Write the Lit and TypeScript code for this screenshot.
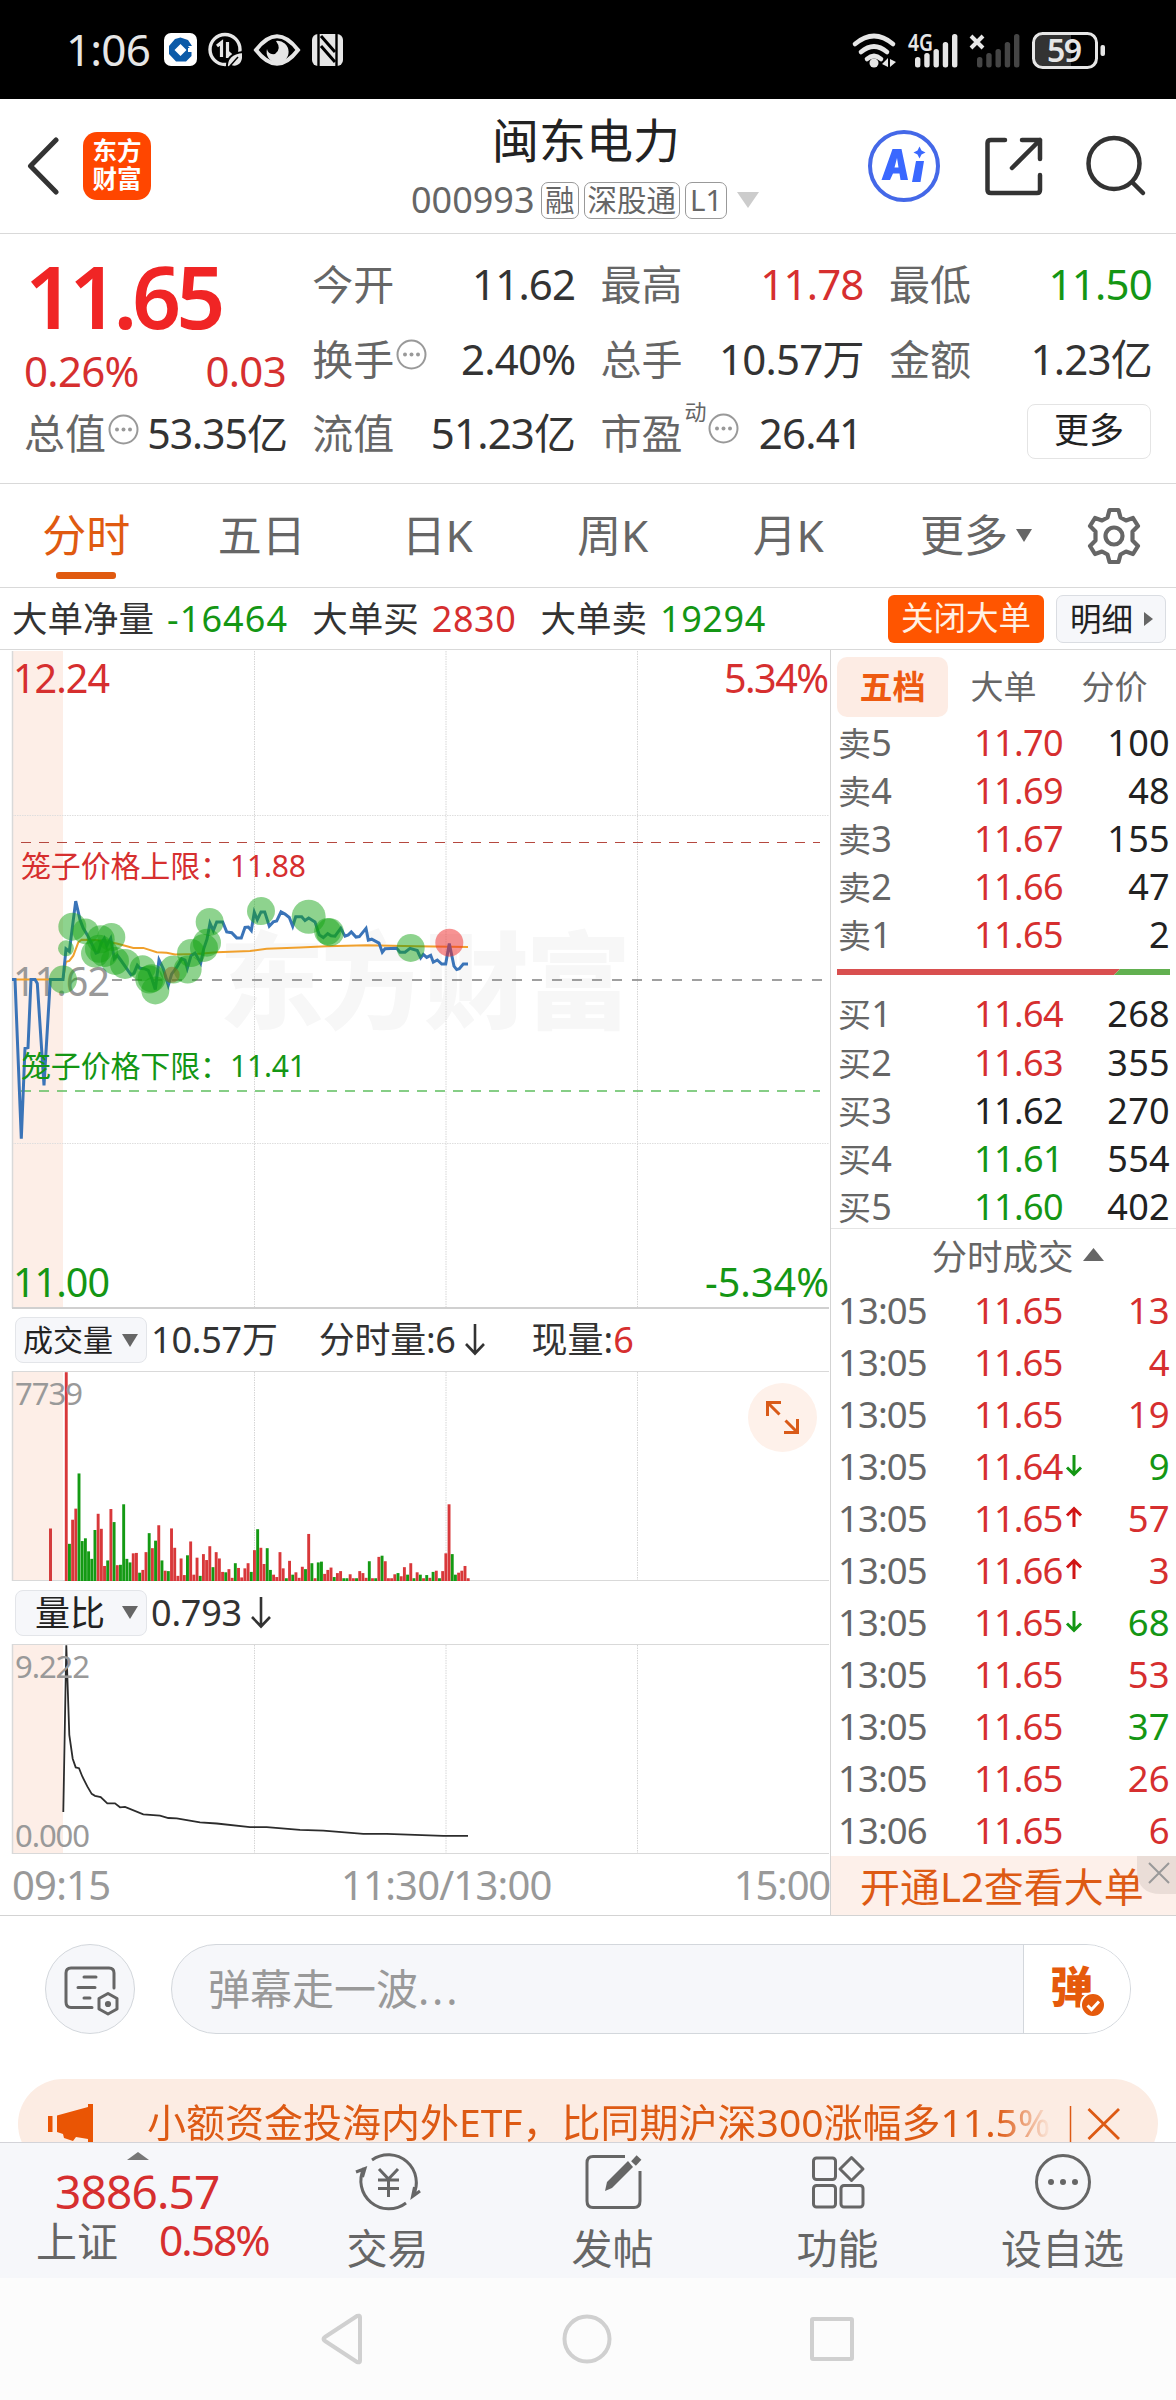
import { LitElement, html, svg, css } from "lit";
import { customElement } from "lit/decorators.js";

type Pt = [number, number];

/* Sample units: 3 per pixel across; the vertical unit depends on the pane. */
const X_UNIT = 3;
const PRICE_UNIT = 2.3059;
const PANE_UNIT = 2.529;

const toPoints = (pts: Pt[], yUnit: number) =>
  pts.map(([x, y]) => `${(x / X_UNIT).toFixed(1)},${(y / yUnit).toFixed(1)}`).join(" ");

const PRICE: Pt[] = [
  [36, 783], [45, 783], [64, 1150], [75, 942], [84, 940], [93, 783], [105, 783], [112, 792], [132, 1027], [151, 783],
  [189, 783], [198, 712], [208, 718], [227, 602], [240, 645], [250, 665], [262, 680], [275, 700], [288, 722], [295, 720],
  [303, 700], [313, 688], [320, 705], [332, 688], [343, 735], [352, 727], [362, 738], [393, 772], [402, 768], [412, 750],
  [420, 757], [433, 758], [445, 762], [455, 780], [466, 806], [477, 738], [490, 758], [505, 796], [515, 770], [530, 755],
  [545, 735], [555, 738], [562, 757], [573, 728], [585, 722], [595, 735], [602, 745], [611, 712], [621, 690], [630, 653],
  [640, 670], [650, 650], [668, 650], [680, 673], [695, 675], [710, 687], [724, 687], [735, 663], [745, 662], [754, 670],
  [763, 628], [772, 645], [783, 627], [794, 627], [808, 660], [820, 650], [830, 648], [843, 627], [855, 632], [868, 640],
  [878, 660], [887, 638], [905, 638], [915, 647], [926, 641], [945, 650], [958, 680], [970, 686], [983, 677], [993, 682],
  [1005, 683], [1022, 665], [1035, 683], [1045, 680], [1054, 673], [1068, 685], [1078, 684], [1098, 665], [1105, 692],
  [1115, 690], [1137, 699], [1147, 720], [1155, 712], [1190, 711], [1200, 720], [1215, 720], [1230, 711], [1252, 716],
  [1262, 733], [1270, 725], [1280, 732], [1292, 727], [1300, 743], [1312, 738], [1325, 747], [1337, 747], [1348, 700],
  [1362, 752], [1370, 760], [1378, 758], [1390, 747], [1404, 747],
];

const AVERAGE: Pt[] = [
  [36, 783], [189, 783], [198, 742], [208, 740], [220, 728], [235, 697], [245, 691], [290, 692], [350, 700], [400, 710],
  [430, 710], [470, 720], [500, 721], [525, 725], [590, 724], [650, 720], [750, 717], [800, 712], [900, 709], [980, 706],
  [1100, 704], [1250, 706], [1404, 708],
];

/* x, y in sample units, radius in pixels */
const SELLS: [number, number, number][] = [
  [189, 783, 14], [198, 711, 8], [217, 661, 14], [257, 672, 13], [302, 690, 14], [334, 685, 14], [285, 723, 14],
  [297, 712, 14], [313, 722, 14], [345, 740, 14], [375, 747, 15], [428, 757, 13], [448, 783, 14], [455, 780, 14],
  [466, 808, 14], [520, 760, 14], [563, 760, 14], [573, 722, 14], [612, 710, 14], [621, 698, 14], [629, 650, 14],
  [783, 625, 14], [926, 638, 17], [983, 672, 13.5], [990, 674, 14], [1232, 710, 14],
];

const RATIO: Pt[] = [
  [190, 1295], [199, 873], [208, 1100], [218, 1160], [227, 1182], [237, 1184], [247, 1205], [262, 1230], [275, 1249],
  [285, 1254], [302, 1257], [322, 1273], [345, 1273], [360, 1283], [375, 1282], [430, 1301], [480, 1304], [505, 1310],
  [530, 1311], [600, 1321], [650, 1324], [750, 1333], [800, 1333], [900, 1340], [970, 1342], [1090, 1350], [1160, 1350],
  [1330, 1355], [1404, 1355],
];

/* One bar per minute: height in units, r = up, g = down */
const VOLUME =
  "528r 94g 155r 183r 272g 101g 108g 75g 56g 129g 170r 132r 38r 52g 182r 149g 40r 41g 194g 56g 47g 70r 71r 21g 28r 73r 121g 83r 102g 141r 52g 26r 25g 133r 84r 13r 57r 15r 65g 100r 16r 59r 13g 68r 53r 88r 35g 73r 57r 23r 22g 30r 8r 45g 33r 9r 32r 45r 23g 78r 131g 84r 43r 83g 28g 16r 10r 73r 32r 7g 51r 16g 22r 8r 36r 30g 119r 45g 7r 47g 49g 18r 28r 34r 10g 20r 25r 7g 7g 17r 7r 7g 25r 20r 8r 50g 7r 7g 61r 64g 50r 7r 7r 17r 20g 12r 35r 16g 45r 7g 22r 16g 7r 15g 8r 23g 26r 7g 25r 70r 194r 68g 16g 21r 26r 38r 7r"
    .split(" ")
    .map((s) => ({ h: parseInt(s, 10), up: s.endsWith("r") }));

const ASKS = [["卖5", "11.70", "100", "up"], ["卖4", "11.69", "48", "up"], ["卖3", "11.67", "155", "up"], ["卖2", "11.66", "47", "up"], ["卖1", "11.65", "2", "up"]];
const BIDS = [["买1", "11.64", "268", "up"], ["买2", "11.63", "355", "up"], ["买3", "11.62", "270", "flat"], ["买4", "11.61", "554", "down"], ["买5", "11.60", "402", "down"]];
const TICKS = [
  ["13:05", "11.65", "", "13", "up"], ["13:05", "11.65", "", "4", "up"], ["13:05", "11.65", "", "19", "up"],
  ["13:05", "11.64", "d", "9", "down"], ["13:05", "11.65", "u", "57", "up"], ["13:05", "11.66", "u", "3", "up"],
  ["13:05", "11.65", "d", "68", "down"], ["13:05", "11.65", "", "53", "up"], ["13:05", "11.65", "", "37", "down"],
  ["13:05", "11.65", "", "26", "up"], ["13:06", "11.65", "", "6", "up"],
];

const dots = html`<svg class="dots" width="31" height="31" viewBox="0 0 31 31">
  <circle cx="15.5" cy="15.5" r="14" fill="none" stroke="#999" stroke-width="2" />
  <g fill="#999"><circle cx="9" cy="15.5" r="2" /><circle cx="15.5" cy="15.5" r="2" /><circle cx="22" cy="15.5" r="2" /></g>
</svg>`;

const caret = html`<svg width="16" height="13" viewBox="0 0 16 13"><path d="M0 0H16L8 13Z" fill="#666" /></svg>`;

const arrowDown = html`<svg class="ar" width="20" height="32" viewBox="0 0 20 32">
  <path d="M10 0V29M1 20L10 29.500L19 20" fill="none" stroke="#333" stroke-width="2.600" />
</svg>`;

const tickArrow = (dir: string) =>
  dir === "u"
    ? html`<svg width="18" height="24" viewBox="0 0 18 24"><path d="M9 21V3M2 9.500L9 2.500L16 9.500" fill="none" stroke="#d01515" stroke-width="3" /></svg>`
    : dir === "d"
      ? html`<svg width="18" height="24" viewBox="0 0 18 24"><path d="M9 1V20M2 13.500L9 20.500L16 13.500" fill="none" stroke="#149614" stroke-width="3" /></svg>`
      : "";

const gridLines = (top: number, bottom: number) =>
  [254.5, 446, 637.5].map((x) => svg`<line x1=${x} x2=${x} y1=${top} y2=${bottom} stroke="#d6d6d6" stroke-width="1" stroke-dasharray="1.500 1" />`);

const signal = (x: number, color: string) =>
  [56, 52, 48, 41, 33].map((top, i) => svg`<rect x=${x + i * 9.25} y=${top} width="5.400" height=${66.500 - top} rx="2.500" fill=${color} />`);

@customElement("app-root")
export class AppRoot extends LitElement {
  static styles = css`
    :host { display: block; width: 1176px; height: 2400px; overflow: hidden; background: #fff; color: #333;
      font-family: "Noto Sans", "Noto Sans CJK SC", sans-serif; }
    * { box-sizing: border-box; }
    svg { display: block; flex: none; }
    div, span { white-space: nowrap; }
    .up { color: #d62f2f; }
    .down { color: #149614; }
    .flat { color: #222; }

    .status { height: 99px; background: #000; display: flex; align-items: center; padding: 0 70px 0 66px; color: #e6e6e6; }
    .time { font-size: 44px; line-height: 58px; height: 60px; width: 96px; letter-spacing: -0.8px; }
    .status .right { margin-left: auto; overflow: visible; }

    .header { height: 135px; border-bottom: 1px solid #d9d9d9; display: grid; grid-template-columns: 411px 350px 1fr; }
    .hleft { display: flex; align-items: center; padding-left: 26px; gap: 24px; }
    .logo { width: 68px; height: 68px; border-radius: 14px; background: #ff4600; color: #fff; font-weight: 700; font-size: 24.5px; line-height: 28px; padding-top: 5px; text-align: center; }
    .title { text-align: center; font-size: 47px; line-height: 56px; padding-top: 13px; color: #222; }
    .code { display: flex; align-items: center; height: 38px; gap: 5px; font-size: 36px; color: #666; margin-top: 13px; line-height: 36px; }
    .code b { font-weight: 400; width: 125px; }
    .chip { border: 1.5px solid #999; border-radius: 7px; height: 37px; padding: 0 3px; font-size: 29.5px; line-height: 33px; }
    .chip.l1 { padding: 0 4px; }
    .code svg { margin-left: 5px; }
    .hright { display: flex; align-items: center; padding-left: 105px; gap: 40.500px; }

    .quote { height: 250px; border-bottom: 1px solid #d9d9d9; padding: 13px 25px 0 24px; display: grid; grid-template-columns: repeat(4, 262px); column-gap: 26.3px; color: #333; font-size: 42px; }
    .cell { height: 74.6px; display: flex; align-items: center; line-height: 74.6px; }
    .cell i { font-style: normal; color: #666; font-size: 41px; }
    .cell span { margin-left: auto; letter-spacing: -0.8px; margin-right: -1px; }
    .cell .dots { margin: -9px 0 0 2px; }
    .price { font-size: 86px; font-weight: 600; line-height: 97px; letter-spacing: -5px; padding-left: 1px; color: #f02525; }
    .chg { display: flex; justify-content: space-between; line-height: 53px; letter-spacing: -0.7px; }
    .cap { height: 73px; line-height: 73px; }
    .cap span { letter-spacing: -1px; font-size: 41px; }
    .cell .sup { font-size: 22px; line-height: 24px; margin: -44px 0 0 2px; color: #666; }
    .cell .pe { margin: 0 auto 0 20px; }
    .more { margin-left: auto; width: 124px; height: 55px; border: 1.5px solid #e4e4e4; border-radius: 8px; font-size: 35px; line-height: 50px; text-align: center; margin-top: -4px; color: #222; }

    .tabs { height: 104px; margin-left: -1.5px; border-bottom: 1px solid #d9d9d9; display: flex; font-size: 44px; line-height: 103px; color: #666; align-items: center; }
    .tab { width: 175.5px; text-align: center; height: 103px; display: flex; flex-direction: column; align-items: center; }
    .tab.on { color: #e05a10; }
    .tab.on::after { content: ""; width: 60px; height: 6.500px; border-radius: 3px; background: #e05a10; margin-top: -15px; flex: none; }
    .tabmore { margin-left: 44px; display: flex; align-items: center; gap: 8px; width: 167px; }

    .big { height: 62px; border-bottom: 1px solid #d9d9d9; display: flex; align-items: center; font-size: 35.5px; padding: 0 10px 0 12px; line-height: 61px; color: #333; }
    .big .n { margin: 0 24px 0 13px; font-size: 36px; letter-spacing: 0.6px; }
    .big .net { letter-spacing: 1.1px; }
    .off { margin-left: auto; width: 156px; height: 48px; border-radius: 6px; background: #ff5500; color: #fff1e4; font-size: 32.5px; line-height: 46px; text-align: center; }
    .detail { margin-left: 12px; width: 110px; height: 48px; border: 1px solid #dadde2; border-radius: 7px; background: #f6f7fa; display: flex; align-items: center; padding-left: 13px; gap: 11px; font-size: 31.5px; color: #222; line-height: 46px; }

    .main { display: flex; height: 1266px; border-bottom: 1px solid #d3d3d3; }
    .charts { width: 830px; }
    .charts svg { font-family: "Noto Sans", "Noto Sans CJK SC", sans-serif; }
    .ind { height: 62px; padding: 0 0 0 15px; display: flex; align-items: center; font-size: 36px; line-height: 60px; color: #333; }
    .ind.second { height: 63px; }
    .pick { width: 132px; height: 46px; border: 1px solid #e3e5e9; border-radius: 8px; background: #f6f7fa; display: flex; align-items: center; justify-content: flex-end; gap: 9px; padding-right: 8px; font-size: 30px; color: #222; line-height: 44px; }
    .pick.ratio { font-size: 35px; gap: 17px; }
    .ind .v { margin-left: 4px; letter-spacing: -0.2px; }
    .ind .m { margin-left: 41px; letter-spacing: -0.3px; }
    .ind .ar { margin-left: 9px; }
    .ind .c { margin-left: 47px; }
    .axis { height: 61px; display: flex; padding: 0 0 0 12px; font-size: 40px; line-height: 62px; color: #999; letter-spacing: -0.8px; }
    .axis span:first-child { width: 329px; }
    .axis span:last-child { margin-left: auto; letter-spacing: -1.2px; }

    .panel { flex: 1; border-left: 1.500px solid #d3d3d3; }
    .ptabs { display: flex; height: 69px; padding: 7px 0 0 6px; font-size: 33px; line-height: 60px; color: #666; }
    .ptabs span { width: 111px; text-align: center; height: 60px; }
    .ptabs .on { background: #fdece4; border-radius: 10px; color: #ee5a10; font-weight: 700; }
    .row { display: grid; grid-template-columns: 136px 108px 1fr; height: 48.1px; line-height: 48px; font-size: 36px; padding: 0 6px 0 7px; letter-spacing: 0.3px; }
    .row i { font-style: normal; color: #666; }
    .row i b { font-weight: 400; font-size: 33px; }
    .row u { text-decoration: none; text-align: right; color: #222; }
    .row span, .row div { letter-spacing: -0.6px; }
    .row div { display: flex; align-items: center; gap: 3px; }
    .ratio-bar { margin: 10px 0 15px 6px; width: 333px; }
    .thead { border-top: 1px solid #e4e4e4; margin-top: -3px; height: 56px; display: flex; justify-content: center; align-items: center; gap: 9px; padding-left: 28px; font-size: 35.5px; line-height: 54px; color: #666; }
    .thead svg { margin-top: -4px; }
    .tick { height: 52px; line-height: 52px; font-size: 36.5px; }
    .tick i { letter-spacing: -0.9px; }
    .tick div { letter-spacing: -1px; }
    .tick.up u { color: #d62f2f; }
    .tick.down u { color: #149614; }
    .promo { height: 59px; background: #fdf0ea; color: #dd5a14; font-size: 40px; line-height: 62px; padding-left: 29px; position: relative; }
    .promo svg { position: absolute; right: 0; top: 0; }

    .chat { height: 163px; padding: 28px 0 0 45px; display: flex; gap: 36px; }
    .round { width: 90px; height: 90px; border-radius: 45px; border: 1px solid #d3d7dc; background: #f6f7fa; }
    .input { width: 960px; height: 90px; border-radius: 45px; border: 1px solid #d3d7dc; background: #f6f7fa; overflow: hidden; display: flex; font-size: 42px; line-height: 88px; color: #999; padding-left: 36px; }
    .input .dotted { letter-spacing: 2.8px; }
    .dan { margin-left: auto; width: 107px; border-left: 1px solid #d3d7dc; background: #fff; color: #e55a0c; font-weight: 900; font-size: 43px; padding-left: 26px; line-height: 84px; position: relative; }
    .dan svg { position: absolute; left: 55px; top: 46px; }
    .clip { height: 63px; padding: 0 18px; overflow: hidden; }
    .banner { height: 90px; border-radius: 45px; background: #fcece3; color: #dd5a14; display: flex; font-size: 39px; padding-left: 30px; }
    .banner .txt { margin-left: 54px; line-height: 85px; width: 908px; overflow: hidden; -webkit-mask-image: linear-gradient(90deg, #000 850px, transparent 905px); mask-image: linear-gradient(90deg, #000 850px, transparent 905px); }

    .dock { height: 136px; background: #f6f7fa; border-top: 1px solid #d3d3d8; display: flex; color: #666; font-size: 41px; }
    .index { width: 314px; padding-top: 9px; }
    .index svg { margin-left: 127px; }
    .idx { font-size: 46px; line-height: 48px; margin: 7px 0 0 55px; letter-spacing: -0.8px; }
    .sh { display: flex; gap: 41px; line-height: 46px; margin: -2px 0 0 36px; padding-top: 5px; }
    .sh .up { letter-spacing: -2px; font-size: 42.5px; margin-top: -1px; }
    .item { width: 147px; display: flex; flex-direction: column; align-items: center; padding-top: 8px; line-height: 48px; }
    .item svg { margin-bottom: 11px; }
    .item + .item { margin-left: 78px; }
    .nav { height: 122px; background: #fcfcfc; display: flex; align-items: center; justify-content: center; gap: 196px; }
    .nav svg { fill: none; stroke: #d0d0d0; stroke-width: 4; stroke-linejoin: round; }
  `;

  private status() {
    return html`<div class="status">
      <span class="time">1:06</span>
      <svg width="184" height="40" viewBox="162 30 184 40">
        <rect x="164" y="33" width="33" height="33" rx="7" fill="#fff" />
        <path d="M180.500 37.500L188 40L192 46H188L191.500 50V56L186 61.500H176L169 54V46L175 39Z" fill="#0b5aa8" />
        <path d="M180.500 44L186.500 50L180.500 56L174.500 50ZM188 48H193V52H188Z" fill="#fff" />
        <circle cx="225" cy="49.500" r="15" fill="none" stroke="#e6e6e6" stroke-width="3.400" />
        <path d="M217 46L221.500 42.500V57M227.500 42V56.500H232.500L227.500 52" fill="none" stroke="#e6e6e6" stroke-width="3.200" />
        <path d="M227 68C226 57 233 53 243 52V58C242 66 235 68 231 66Z" fill="#e6e6e6" stroke="#000" stroke-width="2" />
        <path d="M230 66L238 57" stroke="#000" stroke-width="1.500" />
        <path d="M256 50Q277 22.500 298 50Q277 77.500 256 50Z" fill="none" stroke="#e6e6e6" stroke-width="4" />
        <path d="M267 49A11 11 0 1 0 276 41Q282 49 275 54Q268 55 267 49Z" fill="#e6e6e6" />
        <rect x="312" y="34" width="31" height="32" rx="6" fill="#e6e6e6" />
        <path d="M318.500 34V66M336.500 34V66" stroke="#000" stroke-width="2.400" />
        <path d="M321 36L335 52M321 46L335 62" stroke="#000" stroke-width="3" />
      </svg>
      <svg class="right" width="256" height="42" viewBox="850 28 256 42" font-family="Noto Sans">
        <g fill="none" stroke="#e6e6e6" stroke-width="5" stroke-linecap="round">
          <path d="M855 43Q874 27 893 43M861 51Q874 40 887 51M867 58Q874 52 881 58" stroke-width="4.600" />
        </g>
        <circle cx="874" cy="62" r="4.500" fill="#e6e6e6" />
        <path d="M882 63L888 57V66M890 58V66L896 61" fill="#e6e6e6" />
        <text x="908" y="49.500" font-size="22.500" font-weight="600" fill="#e6e6e6" textLength="25" lengthAdjust="spacingAndGlyphs">4G</text>
        ${signal(915, "#e6e6e6")}
        <path d="M971 35L983 47M983 35L971 47" stroke="#e6e6e6" stroke-width="4" />
        ${signal(977, "#454545")}
        <path d="M1042 33H1071V66H1042Q1033 66 1033 57V42Q1033 33 1042 33Z" fill="#333" />
        <rect x="1033.500" y="32.500" width="63" height="34" rx="9" fill="none" stroke="#e6e6e6" stroke-width="3" />
        <rect x="1100.500" y="44" width="4.500" height="11" rx="2" fill="#e6e6e6" />
        <text x="1064.500" y="61" font-size="32" font-weight="600" fill="#e6e6e6" text-anchor="middle" textLength="35">59</text>
      </svg>
    </div>`;
  }

  private header() {
    return html`<div class="header">
      <div class="hleft">
        <svg width="33" height="60" viewBox="0 0 33 60"><path d="M30 4L4.500 30L30 56" fill="none" stroke="#333" stroke-width="5" stroke-linecap="round" stroke-linejoin="round" /></svg>
        <div class="logo">东方<br />财富</div>
      </div>
      <div>
        <div class="title">闽东电力</div>
        <div class="code">
          <b>000993</b><span class="chip">融</span><span class="chip">深股通</span><span class="chip l1">L1</span>
          <svg width="22" height="16" viewBox="0 0 22 16"><path d="M0 0H22L11 16Z" fill="#ccc" /></svg>
        </div>
      </div>
      <div class="hright">
        <svg width="76" height="76" viewBox="866.500 128 76 76">
          <circle cx="904.500" cy="166" r="34" fill="none" stroke="#4468e8" stroke-width="4" />
          <path d="M893 149H902L908.500 180H901L900 173.500H893.500L890.500 180H882ZM897.500 158L895 167.500H899Z" fill="#3a68ff" fill-rule="evenodd" />
          <path d="M916.500 161H924.500L921 182H912.500ZM920 146.500L922 150.500L926 152.500L922 154.500L920 158.500L918 154.500L914 152.500L918 150.500Z" fill="#3a68ff" />
        </svg>
        <svg width="62" height="62" viewBox="982 135 62 62" fill="none" stroke="#333" stroke-width="4.500" stroke-linecap="round" stroke-linejoin="round">
          <path d="M1004 140H990Q986.500 140 986.500 143V190Q986.500 193 990 193H1036Q1039 193 1039 190V175M1021 140H1039V159M1039 140L1011 168" />
        </svg>
        <svg width="62" height="62" viewBox="1085.500 135 62 62" fill="none" stroke="#333" stroke-width="4.500" stroke-linecap="round">
          <circle cx="1114.500" cy="163.500" r="25.500" /><path d="M1133 182.500L1143.500 193" />
        </svg>
      </div>
    </div>`;
  }

  private quote() {
    return html`<div class="quote">
      <div>
        <div class="price">11.65</div>
        <div class="chg up"><span>0.26%</span><span>0.03</span></div>
        <div class="cell cap"><i>总值</i>${dots}<span>53.35亿</span></div>
      </div>
      <div>
        <div class="cell"><i>今开</i><span>11.62</span></div>
        <div class="cell"><i>换手</i>${dots}<span>2.40%</span></div>
        <div class="cell"><i>流值</i><span>51.23亿</span></div>
      </div>
      <div>
        <div class="cell"><i>最高</i><span class="up">11.78</span></div>
        <div class="cell"><i>总手</i><span>10.57万</span></div>
        <div class="cell"><i>市盈</i><span class="sup">动</span>${dots}<span class="pe">26.41</span></div>
      </div>
      <div>
        <div class="cell"><i>最低</i><span class="down">11.50</span></div>
        <div class="cell"><i>金额</i><span>1.23亿</span></div>
        <div class="cell"><div class="more">更多</div></div>
      </div>
    </div>`;
  }

  private tabs() {
    return html`<div class="tabs">
        ${["分时", "五日", "日K", "周K", "月K"].map((t, i) => html`<div class="tab ${i === 0 ? "on" : ""}">${t}</div>`)}
        <div class="tabmore">更多${caret}</div>
        <svg width="54" height="60" viewBox="-27 -30 54 60" fill="none" stroke="#666" stroke-width="4.200" stroke-linejoin="round">
          <path d="M-4.500 -26H4.500L6.500 -18.500L12 -15.500L19 -18L24 -10L18.500 -4.500V4.500L24 10L19 18L12 15.500L6.500 18.500L4.500 26H-4.500L-6.500 18.500L-12 15.500L-19 18L-24 10L-18.500 4.500V-4.500L-24 -10L-19 -18L-12 -15.500L-6.500 -18.500Z" />
          <circle r="8.500" />
        </svg>
      </div>
      <div class="big">
        大单净量<span class="n net down">-16464</span>大单买<span class="n up">2830</span>大单卖<span class="n down">19294</span>
        <div class="off">关闭大单</div>
        <div class="detail">明细<svg width="9" height="14" viewBox="0 0 9 14"><path d="M0 0L9 7L0 14Z" fill="#666" /></svg></div>
      </div>`;
  }

  private priceChart() {
    return html`<svg width="830" height="659" viewBox="0 650 830 659">
      <rect x="12" y="651" width="51" height="657" fill="#fdeee7" />
      <text x="219" y="1020" font-size="105" font-weight="900" fill="#f7f7f7" textLength="412">东方财富</text>
      ${gridLines(651, 1308)}
      <path d="M12 815.500H829M12 1143.500H829" stroke="#dedede" stroke-dasharray="1.500 1" />
      <path d="M12.500 651V1308" stroke="#d9d9d9" stroke-width="1.500" />
      <path d="M12 1308H829" stroke="#d0d0d0" stroke-width="2" />
      <path d="M21 842.500H820" stroke="#b5483f" stroke-width="1" stroke-dasharray="10 8" />
      <path d="M21 1091H820" stroke="#5fbf5f" stroke-width="1.500" stroke-dasharray="10 8" />
      <path d="M112 980H822" stroke="#808080" stroke-width="1.700" stroke-dasharray="10 10" />
      <text x="13" y="995.500" font-size="39.500" fill="#999" textLength="97">11.62</text>
      <g transform="translate(0 640)">
        <polyline points=${toPoints(AVERAGE, PRICE_UNIT)} fill="none" stroke="#f0a02c" stroke-width="2" />
        <polyline points=${toPoints(PRICE, PRICE_UNIT)} fill="none" stroke="#3a74b8" stroke-width="3" />
        ${SELLS.map(([x, y, r]) => svg`<circle cx=${x / X_UNIT} cy=${y / PRICE_UNIT} r=${r} fill="#12a412" fill-opacity="0.48" />`)}
        <circle cx="171.700" cy="334.800" r="8" fill="#8a6a20" fill-opacity="0.5" />
        <circle cx="449.300" cy="302.700" r="14" fill="#f02828" fill-opacity="0.5" />
      </g>
      <g font-size="39.500">
        <text x="13" y="693" fill="#d62f2f" textLength="97">12.24</text>
        <text x="724" y="693" fill="#d62f2f" textLength="105">5.34%</text>
        <text x="13" y="1297" fill="#149614" textLength="97">11.00</text>
        <text x="705" y="1297" fill="#149614" textLength="124">-5.34%</text>
      </g>
      <g font-size="30">
        <text x="21" y="877" fill="#d62f2f" textLength="285">笼子价格上限：11.88</text>
        <text x="21" y="1077" fill="#149614" textLength="285">笼子价格下限：11.41</text>
      </g>
    </svg>`;
  }

  private volumeChart() {
    return html`<svg width="830" height="210" viewBox="0 1371 830 210">
      <rect x="12" y="1371" width="51" height="209" fill="#fdeee7" />
      ${gridLines(1372, 1580)}
      <path d="M12 1371.500H829M12 1580.500H829" stroke="#d9d9d9" />
      <path d="M12.500 1371V1581" stroke="#d9d9d9" stroke-width="1.500" />
      <rect x="49" y="1528.500" width="3" height="52.500" fill="#d43c3c" />
      ${VOLUME.map((b, i) => svg`<rect x=${64.800 + i * 3.19} y=${1581 - b.h / PANE_UNIT} width="2.900" height=${b.h / PANE_UNIT} fill=${b.up ? "#d8383a" : "#149a14"} />`)}
      <text x="15" y="1404.500" font-size="31" fill="#999" textLength="68">7739</text>
      <circle cx="782.500" cy="1417.500" r="34.500" fill="#fef1ea" />
      <path d="M767.500 1416V1402.500H781M768 1403L779.500 1414.500M797.500 1419V1432.500H784M797 1432L785.500 1420.500" fill="none" stroke="#d95a18" stroke-width="3" />
    </svg>`;
  }

  private ratioChart() {
    return html`<svg width="830" height="210" viewBox="0 1644 830 210">
      <rect x="12" y="1644" width="51" height="210" fill="#fdeee7" />
      ${gridLines(1645, 1854)}
      <path d="M12 1644.500H829M12 1853.500H829" stroke="#d9d9d9" />
      <path d="M12.500 1644V1854" stroke="#d9d9d9" stroke-width="1.500" />
      <polyline transform="translate(0 1300)" points=${toPoints(RATIO, PANE_UNIT)} fill="none" stroke="#2c2c2c" stroke-width="1.800" />
      <g font-size="31" fill="#999">
        <text x="15" y="1677.500" textLength="75">9.222</text>
        <text x="15" y="1846.500" textLength="75">0.000</text>
      </g>
    </svg>`;
  }

  private book(rows: string[][]) {
    return rows.map(([n, p, q, c]) => html`<div class="row"><i><b>${n[0]}</b>${n[1]}</i><span class=${c}>${p}</span><u>${q}</u></div>`);
  }

  private main() {
    return html`<div class="main">
      <div class="charts">
        ${this.priceChart()}
        <div class="ind">
          <div class="pick">成交量${caret}</div>
          <span class="v">10.57万</span><span class="m">分时量:6</span>${arrowDown}<span class="c">现量:<span class="up">6</span></span>
        </div>
        ${this.volumeChart()}
        <div class="ind second">
          <div class="pick ratio">量比${caret}</div>
          <span class="v">0.793</span>${arrowDown}
        </div>
        ${this.ratioChart()}
        <div class="axis"><span>09:15</span><span>11:30/13:00</span><span>15:00</span></div>
      </div>
      <div class="panel">
        <div class="ptabs"><span class="on">五档</span><span>大单</span><span>分价</span></div>
        ${this.book(ASKS)}
        <svg class="ratio-bar" width="333" height="6" viewBox="0 0 333 6"><path d="M0 0H283L277 6H0Z" fill="#d94f4f" /><path d="M283 0H333V6H277Z" fill="#62b050" /></svg>
        ${this.book(BIDS)}
        <div class="thead">分时成交<svg width="21" height="13" viewBox="0 0 21 13"><path d="M0 13H21L10.500 0Z" fill="#666" /></svg></div>
        ${TICKS.map(([t, p, a, q, c]) => html`<div class="row tick ${c}"><i>${t}</i><div class="up">${p}${tickArrow(a)}</div><u>${q}</u></div>`)}
        <div class="promo">开通L2查看大单<svg width="39" height="38" viewBox="0 0 39 38"><path d="M0 0H39V38H24Q0 38 0 14Z" fill="#eaddd7" /><path d="M12 7L32 27M32 7L12 27" stroke="#999" stroke-width="2" /></svg></div>
      </div>
    </div>`;
  }

  private chat() {
    return html`<div class="chat">
        <div class="round">
          <svg width="88" height="88" viewBox="46 1945 88 88" fill="none" stroke="#666" stroke-width="3" stroke-linecap="round">
            <path d="M92 2007.500H71Q66 2007.500 66 2002V1973Q66 1968 71 1968H109Q114 1968 114 1973V1988M84 1977H96M78 1987.500H95M84 1998H90" />
            <path d="M108 1993.500L117 1998.500V2009L108 2014L99 2009V1998.500Z" stroke-linejoin="round" />
            <circle cx="108" cy="2004" r="1.600" fill="#666" />
          </svg>
        </div>
        <div class="input">弹幕走一波<span class="dotted">...</span>
          <div class="dan">弹<svg width="28" height="28" viewBox="0 0 28 28"><circle cx="14" cy="14" r="12" fill="#e55a0c" stroke="#fff" stroke-width="2" /><path d="M8.500 14.500L12.500 18.500L20 10.500" fill="none" stroke="#fff" stroke-width="3" /></svg></div>
        </div>
      </div>
      <div class="clip">
        <div class="banner">
          <svg width="45" height="70" viewBox="48 2079 45 70" fill="#ea5504"><path d="M48 2116H52.500V2132H48ZM57 2115.500L88 2107V2104H93V2142H88V2139L76 2137L73 2141L64 2138L63 2134L57 2132Z" /></svg>
          <div class="txt">小额资金投海内外ETF，比同期沪深300涨幅多11.5%；</div>
          <svg width="90" height="70" viewBox="1055 2079 90 70" fill="none" stroke="#dd5a14"><path d="M1070.500 2106V2149" stroke-width="1.500" /><path d="M1088.500 2109L1119 2139M1119 2109L1088.500 2139" stroke-width="2.800" /></svg>
        </div>
      </div>`;
  }

  private dock() {
    return html`<div class="dock">
        <div class="index">
          <svg width="22" height="8" viewBox="0 0 22 8"><path d="M0 8L11 0L22 8Z" fill="#777" /></svg>
          <div class="idx up">3886.57</div>
          <div class="sh"><span>上证</span><span class="up">0.58%</span></div>
        </div>
        <div class="item">
          <svg width="66" height="62" viewBox="354 2151 66 62" fill="none" stroke="#666" stroke-width="3">
            <path d="M371 2160A28 28 0 0 1 412 2196M419 2191L411.500 2196.500L413.500 2187M405 2203A28 28 0 0 1 363 2168M355 2172L364 2168.500L361.500 2177" />
            <path d="M378 2169L387.500 2179L397 2169M387.500 2179V2197M377 2180H398M377 2188.500H398" />
          </svg>交易
        </div>
        <div class="item">
          <svg width="62" height="62" viewBox="581 2151 62 62" fill="none" stroke="#666" stroke-width="3">
            <path d="M624 2156.500H592Q586 2156.500 586 2163V2201Q586 2207.500 592 2207.500H633Q639 2207.500 639 2201V2171" />
            <path d="M604 2191L606 2182L627 2161L632 2167L611 2188Z" fill="#666" stroke="none" />
            <path d="M632.500 2163.500L638 2157.500" stroke-width="6.500" />
          </svg>发帖
        </div>
        <div class="item">
          <svg width="62" height="62" viewBox="807 2151 62 62" fill="none" stroke="#666" stroke-width="3">
            <rect x="813.500" y="2158" width="22" height="21.500" rx="3" /><rect x="813.500" y="2185.500" width="22" height="21.500" rx="3" /><rect x="841" y="2185.500" width="22" height="21.500" rx="3" />
            <path d="M851.500 2157.500L863 2169L851.500 2180.500L840 2169Z" stroke-linejoin="round" />
          </svg>功能
        </div>
        <div class="item">
          <svg width="62" height="62" viewBox="1032 2151 62 62"><circle cx="1063" cy="2182" r="26.500" fill="none" stroke="#666" stroke-width="3" /><g fill="#666"><circle cx="1051" cy="2182" r="3" /><circle cx="1063" cy="2182" r="3" /><circle cx="1075" cy="2182" r="3" /></g></svg>设自选
        </div>
      </div>
      <div class="nav">
        <svg width="46" height="52" viewBox="0 0 46 52"><path d="M40 4V48Q40 50 37 49L5 28Q2 26 5 24L37 3Q40 2 40 4Z" /></svg>
        <svg width="50" height="50" viewBox="0 0 50 50"><circle cx="25" cy="25" r="22.500" /></svg>
        <svg width="48" height="48" viewBox="0 0 48 48"><rect x="4" y="4" width="40" height="40" rx="1" /></svg>
      </div>`;
  }

  render() {
    return html`${this.status()}${this.header()}${this.quote()}${this.tabs()}${this.main()}${this.chat()}${this.dock()}`;
  }
}
